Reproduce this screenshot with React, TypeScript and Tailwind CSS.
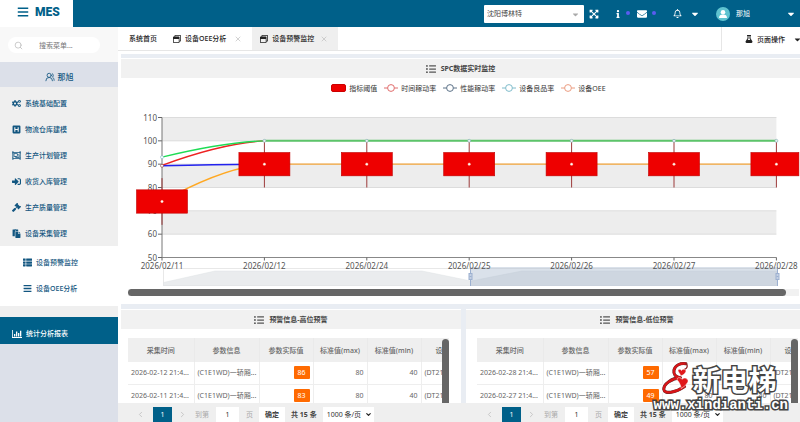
import type { ReactNode } from "react";
import type { IconType } from "react-icons";
import {
  FaBars,
  FaCaretDown,
  FaCogs,
  FaEnvelope,
  FaExpandArrowsAlt,
  FaFlask,
  FaGavel,
  FaHSquare,
  FaInfo,
  FaListUl,
  FaPaste,
  FaRegBell,
  FaRegObjectGroup,
  FaRegWindowRestore,
  FaSignInAlt,
  FaThList,
} from "react-icons/fa";
import { ChevronDown, ChevronLeft, ChevronRight, Search, UsersRound, X } from "lucide-react";

const MENU: { label: string; icon: IconType }[] = [
  { label: "系统基础配置", icon: FaCogs },
  { label: "物流仓库建模", icon: FaHSquare },
  { label: "生产计划管理", icon: FaRegObjectGroup },
  { label: "收货入库管理", icon: FaSignInAlt },
  { label: "生产质量管理", icon: FaGavel },
  { label: "设备采集管理", icon: FaPaste },
];

const SUBMENU: { label: string; icon: IconType }[] = [
  { label: "设备预警监控", icon: FaThList },
  { label: "设备OEE分析", icon: FaBars },
];

const LEGEND = [
  { label: "时间稼动率", color: "#e06c6c" },
  { label: "性能稼动率", color: "#5c7288" },
  { label: "设备良品率", color: "#7fbccb" },
  { label: "设备OEE", color: "#eb9c80" },
];

const COLUMNS = ["采集时间", "参数信息", "参数实际值", "标准值(max)", "标准值(min)", "设备"];

type Row = { time: string; value: number };
const HIGH: Row[] = [
  { time: "2026-02-12 21:4...", value: 86 },
  { time: "2026-02-11 21:4...", value: 83 },
];
const LOW: Row[] = [
  { time: "2026-02-28 21:4...", value: 57 },
  { time: "2026-02-27 21:4...", value: 49 },
];

/** Icône histogramme avec axe en L. */
function BarChartIcon() {
  return (
    <svg viewBox="0 0 20 16" className="h-2 w-2.5 shrink-0" fill="currentColor" aria-hidden>
      <path d="M0 0h1.6v14.2H20V16H0zM4 8h2.6v5H4zM8 3h2.6v10H8zM12 6h2.6v7H12zM16 1.500h2.600V13H16z" />
    </svg>
  );
}

function Header() {
  return (
    <header className="flex h-[27px] items-center bg-[#006089] text-white">
      <div className="flex h-full w-[73px] shrink-0 items-center gap-1.5 bg-white pb-[3px] pl-[17px] text-[#006089]">
        <button type="button" aria-label="菜单"><FaBars size={12} /></button>
        <span className="font-['Roboto',sans-serif] text-[12px] font-black leading-none">MES</span>
      </div>
      <div className="ml-auto flex items-center">
        <div className="relative">
          <select aria-label="公司" className="block h-[18px] w-[100px] appearance-none rounded-[1px] bg-white pl-[3px] text-[7px] text-[#444]">
            <option>沈阳博林特</option>
          </select>
          <FaCaretDown size={9} className="pointer-events-none absolute right-1 top-[5px] text-[#aaa]" />
        </div>
        <button type="button" aria-label="全屏" className="ml-[5px]"><FaExpandArrowsAlt size={10} /></button>
        <button type="button" aria-label="信息" className="ml-[15px]"><FaInfo size={8} /></button>
        <span className="ml-1 mb-0.5 size-1 rounded-full bg-[#5a5cf0]" />
        <button type="button" aria-label="邮件" className="ml-[7px]"><FaEnvelope size={10} /></button>
        <span className="ml-[5px] mb-0.5 size-1 rounded-full bg-[#5a5cf0]" />
        <button type="button" aria-label="通知" className="ml-[17px] flex items-center gap-[8px]">
          <FaRegBell size={9} />
          <FaCaretDown size={10} />
        </button>
        <button type="button" className="ml-[16px] flex items-center text-[7px]">
          <svg viewBox="0 0 28 28" className="size-3.5" aria-hidden>
            <circle cx="14" cy="14" r="14" fill="#5fc3d0" />
            <circle cx="14" cy="10.500" r="4.500" fill="#fff" />
            <path d="M6 22c0-5 3-7 8-7s8 2 8 7z" fill="#fff" />
          </svg>
          <span className="ml-1.5">那旭</span>
          <FaCaretDown size={10} className="ml-[36px] mr-1" />
        </button>
      </div>
    </header>
  );
}

function Sidebar() {
  return (
    <aside className="flex w-[118px] shrink-0 flex-col bg-[#dce0e9] text-[#125680]">
      <div className="h-[35px] bg-[#f8f8f8] px-2 pt-2.5">
        <label className="flex h-4 w-[92px] items-center gap-4 rounded-full bg-white pl-1.5 text-[#bbb]">
          <Search size={9} />
          <input aria-label="搜索菜单" placeholder="搜索菜单..." className="w-12 text-[7px] outline-none placeholder:text-[#777]" />
        </label>
      </div>
      <a href="#user" className="flex h-[25px] items-center justify-center gap-[3px] pt-1 text-[8px] font-medium">
        <UsersRound size={10} /> 那旭
      </a>
      <nav className="bg-[#efefef]">
        <ul className="grid h-[159px] grid-rows-6 pt-[3px]">
          {MENU.map(({ label, icon: Icon }) => (
            <li key={label}>
              <a href="#menu" className="flex h-full items-center gap-1 pl-3 text-[7px] font-medium">
                <Icon size={9} /> {label}
              </a>
            </li>
          ))}
        </ul>
        <ul className="grid h-[60px] grid-rows-2 bg-white pb-1 pt-[3px]">
          {SUBMENU.map(({ label, icon: Icon }) => (
            <li key={label}>
              <a href="#submenu" className="flex h-full items-center gap-1 pl-[23px] text-[7px] font-medium">
                <Icon size={9} /> {label}
              </a>
            </li>
          ))}
        </ul>
        <a href="#report" className="mt-[11px] flex h-[27px] items-center gap-1 bg-[#006089] pl-3 pt-1.5 text-[7px] font-medium text-white">
          <BarChartIcon /> 统计分析报表
        </a>
      </nav>
    </aside>
  );
}

function Tabs() {
  return (
    <div className="flex h-[27px] text-[7px] font-medium text-[#222]">
      <nav className="flex h-6 flex-1 border-b border-r border-[#e6e6e6]">
        <a href="#home" className="flex items-center pl-[11px] pr-4">系统首页</a>
        <a href="#oee" className="flex items-center gap-[4px] pr-2.5">
          <FaRegWindowRestore size={8} /> 设备OEE分析
          <X size={8} className="ml-1 text-[#bbb]" />
        </a>
        <a href="#alert" aria-current="page" className="flex items-center gap-[4px] bg-[#efefef] pl-2 pr-2.5">
          <FaRegWindowRestore size={8} /> 设备预警监控
          <X size={8} className="ml-[2px] text-[#bbb]" />
        </a>
      </nav>
      <button type="button" className="flex h-6 w-[78px] items-center justify-end gap-1">
        <FaFlask size={8} /> 页面操作 <FaCaretDown size={9} className="-mr-[2px] ml-1" />
      </button>
    </div>
  );
}

function PanelTitle({ children }: { children: ReactNode }) {
  return (
    <h2 className="flex h-5 items-center justify-center gap-[5px] border-t border-white bg-[#f1f1f1] text-[7px] font-bold text-[#444]">
      <FaListUl size={10} className="text-[#555]" /> {children}
    </h2>
  );
}

function Legend() {
  return (
    <ul className="flex h-5 items-center justify-center gap-[7px] pl-4 text-[7px] text-[#333]">
      <li className="flex items-center gap-[3px]">
        <span className="h-2 w-[15px] rounded-[2px] border border-[#c00] bg-[#ee0000]" /> 指标阈值
      </li>
      {LEGEND.map((s) => (
        <li key={s.label} className="flex items-center gap-[3px]">
          <svg width="14" height="8" viewBox="0 0 14 8" fill="none" stroke={s.color} aria-hidden>
            <path d="M0 4h3.500M10.500 4H14" />
            <circle cx="7" cy="4" r="3.400" />
          </svg>
          {s.label}
        </li>
      ))}
    </ul>
  );
}

const DATES = ["2026/02/11", "2026/02/12", "2026/02/24", "2026/02/25", "2026/02/26", "2026/02/27", "2026/02/28"];
const TICKS = [110, 100, 90, 80, 70, 60, 50];
const LIMITS = [74, 90, 90, 90, 90, 90, 90];
const px = (i: number) => 41 + i * 102.4;
const py = (v: number) => 19.5 + ((110 - v) * 140) / 60;

// premier segment lissé, les valeurs restent constantes ensuite
function rise(first: number, rest: number) {
  return `M${px(0)} ${py(first)}Q${px(0) + 60} ${py(rest - (rest - first) * 0.1)} ${px(1)} ${py(rest)}`;
}

function SpcChart() {
  return (
    <svg viewBox="0 0 679 189" className="block w-full font-['Noto_Sans',sans-serif] text-[8px]" role="img" aria-label="SPC数据实时监控">
      {[110, 90, 70].map((v) => (
        <rect key={v} x={px(0)} y={py(v)} width={px(6) - px(0)} height={py(50) - py(60)} fill="#ededed" />
      ))}
      {TICKS.map((v) => (
        <g key={v}>
          <path d={`M${px(0)} ${py(v)}H${px(6)}`} stroke="#dcdcdc" />
          <path d={`M${px(0) - 4} ${py(v)}h4`} stroke="#666" />
          <text x="36" y={py(v) + 3} textAnchor="end" fill="#555">{v}</text>
        </g>
      ))}
      <path d={`M${px(0)} ${py(110)}V${py(50)}`} stroke="#777" />
      <path d={`M${px(0)} ${py(50)}H${px(6)}`} stroke="#888" />

      {/* zone de zoom sous l'axe */}
      <rect x="42.500" y="170.500" width="614" height="17" fill="none" stroke="#e8e8e8" />
      <path d="M42.500 184.500L94 173H301L350 183L401 173H656V187.500H42.500z" fill="#eaecee" stroke="#dfe2e5" strokeWidth="0.5" />
      <rect x="349.500" y="169" width="307.500" height="19" fill="#a7b7cc" fillOpacity="0.42" />
      {[349.5, 656.5].map((x) => (
        <g key={x} stroke="#9cb0d0">
          <path d={`M${x} 170V188`} />
          <rect x={x - 1.5} y="175.500" width="3" height="6" fill="#c5d1e4" />
          <path d={`M${x - 1} 178.500h2`} />
        </g>
      ))}

      {DATES.map((d, i) => (
        <g key={d}>
          <path d={`M${px(i)} ${py(50)}v3`} stroke="#666" />
          <text x={px(i)} y="171" textAnchor="middle" fill="#555">{d}</text>
        </g>
      ))}

      <g fill="none" strokeWidth="1.4">
        <path d={rise(89.5, 100)} stroke="#ee2222" />
        <path d={rise(93, 100)} stroke="#1fdc55" />
        <path d={rise(89.3, 90)} stroke="#2222ee" />
        <path d={rise(74, 90)} stroke="#ffa822" />
        <path d={`M${px(1)} ${py(90)}H${px(6)}`} stroke="#f5a63a" />
        <path d={`M${px(1)} ${py(100)}H${px(6)}`} stroke="#5cc46a" strokeWidth="2" />
      </g>
      {LIMITS.map((v, i) => (
        <g key={DATES[i]}>
          <path d={`M${px(i)} ${py(v + 10)}V${py(v - 10)}`} stroke="#9c3a3a" />
          <rect x={px(i) - 25.5} y={py(v + 5)} width={i === 6 ? 48 : 51} height={py(v - 5) - py(v + 5)} fill="#ee0000" stroke="#c00000" strokeWidth="0.6" />
          <circle cx={px(i)} cy={py(v)} r="1.200" fill="#fff" stroke="#f7b9a0" strokeWidth="0.5" />
          {i > 0 && <circle cx={px(i)} cy={py(100)} r="1.500" fill="#e8f2f3" stroke="#7fa9ae" strokeWidth="0.6" />}
        </g>
      ))}
      <circle cx={px(0)} cy={py(93)} r="1.500" fill="#fff" stroke="#7fbccb" strokeWidth="0.6" />
      <circle cx={px(0)} cy={py(89.3)} r="1.500" fill="#fff" stroke="#8a3a3a" strokeWidth="0.6" />
    </svg>
  );
}

function AlertTable({ rows }: { rows: Row[] }) {
  return (
    <div className="relative h-[65px] overflow-hidden">
      <table className="w-[348px] table-fixed border-collapse text-[7px] text-[#666]">
        <colgroup>
          <col className="w-[66px]" />
          <col className="w-[65px]" />
          <col className="w-[54px]" />
          <col className="w-[54px]" />
          <col className="w-[54px]" />
          <col className="w-[55px]" />
        </colgroup>
        <thead>
          <tr className="h-6 bg-[#efefef]">
            {COLUMNS.map((c) => (
              <th key={c} className="whitespace-nowrap border-r border-[#eaeaea] p-0 text-center font-medium last:pr-3">{c}</th>
            ))}
          </tr>
        </thead>
        <tbody>
          {rows.map((r) => (
            <tr key={r.time} className="h-[22px] whitespace-nowrap border-b border-[#eee] [&>td]:border-r [&>td]:border-[#eee] [&>td]:px-[3px]">
              <td>{r.time}</td>
              <td>(C1E1WD)一轿厢...</td>
              <td className="text-right">
                <span className="inline-flex h-[13px] w-4 items-center justify-center rounded-[1px] bg-[#ff6a00] text-white">{r.value}</span>
              </td>
              <td className="text-right">80</td>
              <td className="text-right">40</td>
              <td>(DT21...</td>
            </tr>
          ))}
        </tbody>
      </table>
      <span className="absolute right-0 top-px h-full w-[7px] rounded-t-full bg-[#666]" />
    </div>
  );
}

function Pagination({ label }: { label: string }) {
  return (
    <nav aria-label={label} className="flex h-[19px] min-w-0 items-end text-[7px] text-[#aaa]">
      <button type="button" aria-label="上一页" className="flex h-[15px] items-center text-[#bbb]"><ChevronLeft size={9} /></button>
      <button type="button" className="ml-2 h-[15px] w-[19px] bg-[#006089] text-white">1</button>
      <button type="button" aria-label="下一页" className="ml-1.5 flex h-[15px] items-center text-[#bbb]"><ChevronRight size={9} /></button>
      <label className="ml-2 flex h-[15px] items-center gap-[7px]">
        到第
        <input aria-label="页码" defaultValue="1" className="h-full w-[23px] bg-white text-center text-[#333]" />
        页
      </label>
      <button type="button" className="ml-[6px] h-[15px] w-[26px] bg-white font-medium text-[#222]">确定</button>
      <span className="ml-1.5 flex h-[15px] items-center font-bold text-[#444]">共 15 条</span>
      <span className="relative ml-1.5">
        <select aria-label="每页条数" className="block h-[15px] w-[51px] appearance-none bg-white pl-1 text-[#333]">
          <option>1000 条/页</option>
        </select>
        <ChevronDown size={7} strokeWidth={4} className="pointer-events-none absolute right-[2px] top-1 text-[#222]" />
      </span>
    </nav>
  );
}

const SWIRL = "M434 189C418 186 402 194 399 208C397 220 403 228 418 230C392 232 369 248 369 264C370 280 404 274 430 256";

function Watermark() {
  return (
    <div className="pointer-events-none absolute bottom-[9px] right-3 flex flex-col text-white" aria-hidden>
      <div className="mb-px flex items-center gap-[3px] pl-1.5">
        <svg viewBox="358 182 88 101" className="h-[35px] w-[30px]" fill="none">
          <g strokeLinecap="round" strokeLinejoin="round">
            <path d={SWIRL} stroke="#fff" strokeWidth="15" />
            <path d={SWIRL} stroke="#54282a" strokeWidth="9" />
            <path d={SWIRL} stroke="#d71518" strokeWidth="7" />
            <path d="M434 189C441 194 438 203 430 206" stroke="#8f2022" strokeWidth="4" />
          </g>
          <path d="M413 214C406 205 418 203 421 209C426 201 438 207 433 214C430 219 425 223 419 225C418 221 416 218 413 214zM411 240C402 230 418 226 423 235C429 226 445 235 439 244C435 252 427 257 420 262C419 253 416 247 411 240z" fill="#e0181b" stroke="#fff" strokeWidth="1.5" />
        </svg>
        <span className="font-['Noto_Sans_CJK_SC',sans-serif] text-[28px] font-bold leading-8 [-webkit-text-stroke:3px_#444] [paint-order:stroke_fill]">新电梯</span>
      </div>
      <span className="font-['Liberation_Mono',monospace] text-sm font-bold leading-4 [-webkit-text-stroke:3px_#444] [paint-order:stroke_fill]">www.xindianti.cn</span>
    </div>
  );
}

export default function App() {
  return (
    <div className="relative flex min-h-screen flex-col overflow-hidden bg-white font-['Noto_Sans','Noto_Sans_CJK_SC',sans-serif] leading-none">
      <Header />
      <div className="flex flex-1">
        <Sidebar />
        <main className="flex min-w-0 flex-1 flex-col">
          <Tabs />
          <section className="ml-[3px] border-t-4 border-[#e9edf3]">
            <PanelTitle>SPC数据实时监控</PanelTitle>
            <Legend />
            <SpcChart />
            <div className="ml-[7px] mr-px mt-[2px] mb-2 h-[7px] bg-[#f1f1f1]">
              <div className="h-full w-[98%] rounded-full bg-[#666]" />
            </div>
          </section>
          <div className="ml-[3px] grid grid-cols-[340fr_334fr] gap-[5px] border-t-[5px] border-[#e9edf3] bg-[#e9edf3]">
            <section className="min-w-0 bg-white">
              <PanelTitle>预警信息-高位预警</PanelTitle>
              <div className="pl-[7px] pr-3 pt-[9px]"><AlertTable rows={HIGH} /></div>
            </section>
            <section className="min-w-0 bg-white [&>h2]:pl-2">
              <PanelTitle>预警信息-低位预警</PanelTitle>
              <div className="pl-[11px] pr-[2px] pt-[9px]"><AlertTable rows={LOW} /></div>
            </section>
          </div>
          <footer className="grid flex-1 grid-cols-[349fr_315fr] bg-[#efefef] pl-[18px]">
            <Pagination label="高位预警分页" />
            <Pagination label="低位预警分页" />
          </footer>
        </main>
      </div>
      <Watermark />
    </div>
  );
}
